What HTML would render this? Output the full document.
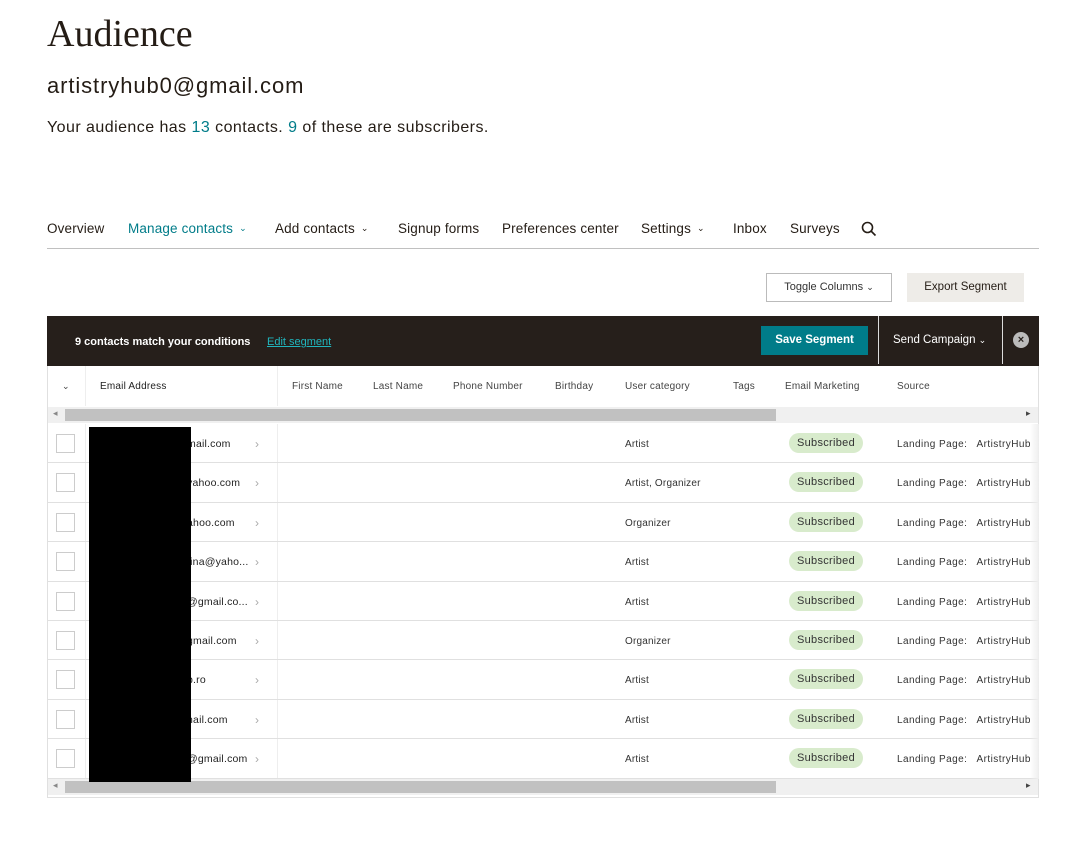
<!DOCTYPE html>
<html><head><style>
*{margin:0;padding:0;box-sizing:border-box}
body{width:1079px;height:858px;background:#fff;font-family:"Liberation Sans",sans-serif;color:#241c15;position:relative;overflow:hidden}
.a{position:absolute;white-space:nowrap}
.nav{font-size:13.5px;top:221px;letter-spacing:.15px}
.ch{font-size:9px;margin-left:6px;vertical-align:2px}
.hd{font-size:10px;color:#444;top:381px;letter-spacing:.2px}
.row{position:absolute;left:47px;width:992px;height:39.4px;border-bottom:1px solid #e0e0e0;font-size:10px;color:#333}
.row .cb{position:absolute;left:9px;top:10px;width:19px;height:19px;border:1px solid #ccc;background:#fff}
.row .vd1{position:absolute;left:38px;top:0;bottom:0;border-left:1px solid #eee}
.row .vd2{position:absolute;left:230px;top:0;bottom:0;border-left:1px solid #eee}
.row .em{position:absolute;left:140px;top:14px;font-size:10.5px;color:#222;letter-spacing:.2px}
.row .ar{position:absolute;left:208px;top:13px;color:#aaa;font-size:12px}
.row .uc{position:absolute;left:578px;top:15px;letter-spacing:.2px}
.row .pill{position:absolute;left:742px;top:9px;width:74px;height:20px;border-radius:10px;background:#d8ebcc;font-size:11px;color:#333;text-align:center;line-height:20px;letter-spacing:.3px}
.row .src{position:absolute;left:850px;top:15px;letter-spacing:.45px}
.sb{position:absolute;left:48px;width:990px;height:16px;background:#f0f0f0}
.sb .th{position:absolute;left:17px;top:2px;width:711px;height:12px;background:#c1c1c1}
</style></head><body>
<div class="a" style="left:47px;top:12px;font-family:'Liberation Serif',serif;font-size:38px">Audience</div>
<div class="a" style="left:47px;top:73px;font-size:22px;letter-spacing:.9px">artistryhub0@gmail.com</div>
<div class="a" style="left:47px;top:119px;font-size:16px;letter-spacing:.45px">Your audience has <span style="color:#007c89">13</span> contacts. <span style="color:#007c89">9</span> of these are subscribers.</div>

<div class="a nav" style="left:47px">Overview</div>
<div class="a nav" style="left:128px;color:#007c89">Manage contacts<span class="ch">⌄</span></div>
<div class="a nav" style="left:275px">Add contacts<span class="ch">⌄</span></div>
<div class="a nav" style="left:398px">Signup forms</div>
<div class="a nav" style="left:502px">Preferences center</div>
<div class="a nav" style="left:641px">Settings<span class="ch">⌄</span></div>
<div class="a nav" style="left:733px">Inbox</div>
<div class="a nav" style="left:790px">Surveys</div>
<svg class="a" style="left:861px;top:221px" width="16" height="16" viewBox="0 0 16 16"><circle cx="6.5" cy="6.5" r="5" fill="none" stroke="#241c15" stroke-width="1.6"/><path d="M10 10l4.5 4.5" stroke="#241c15" stroke-width="1.6"/></svg>
<div class="a" style="left:47px;top:248px;width:992px;border-top:1px solid #c0c0c0"></div>

<div class="a" style="left:766px;top:273px;width:126px;height:29px;border:1px solid #bbb;font-size:11px;text-align:center;line-height:27px;color:#333">Toggle Columns <span style="font-size:9px">⌄</span></div>
<div class="a" style="left:907px;top:273px;width:117px;height:29px;background:#eeece8;font-size:11.5px;text-align:center;line-height:29px">Export Segment</div>

<div class="a" style="left:47px;top:316px;width:992px;height:50px;background:#261f1b"></div>
<div class="a" style="left:75px;top:336px;font-size:11px;font-weight:bold;color:#fff">9 contacts match your conditions</div>
<div class="a" style="left:267px;top:336px;font-size:11px;color:#20b5bd;text-decoration:underline">Edit segment</div>
<div class="a" style="left:761px;top:326px;width:107px;height:29px;background:#007c89;color:#fff;font-size:11.5px;font-weight:bold;text-align:center;line-height:29px">Save Segment</div>
<div class="a" style="left:878px;top:316px;height:48px;border-left:1px solid #ddd"></div>
<div class="a" style="left:893px;top:334px;font-size:11.5px;color:#fff">Send Campaign <span style="font-size:9px">⌄</span></div>
<div class="a" style="left:1002px;top:316px;height:48px;border-left:1px solid #ddd"></div>
<div class="a" style="left:1013px;top:332px;width:16px;height:16px;border-radius:50%;background:#bbb;color:#261f1b;font-size:11px;text-align:center;line-height:16px;font-weight:bold">×</div>

<div class="a" style="left:47px;top:366px;width:992px;height:432px;border:1px solid #e0e0e0;border-top:none"></div>
<div class="a" style="left:85px;top:366px;height:40px;border-left:1px solid #eee"></div>
<div class="a" style="left:277px;top:366px;height:40px;border-left:1px solid #eee"></div>
<div class="a hd" style="left:62px;font-size:9px">⌄</div>
<div class="a hd" style="left:100px;color:#222">Email Address</div>
<div class="a hd" style="left:292px">First Name</div>
<div class="a hd" style="left:373px">Last Name</div>
<div class="a hd" style="left:453px">Phone Number</div>
<div class="a hd" style="left:555px">Birthday</div>
<div class="a hd" style="left:625px">User category</div>
<div class="a hd" style="left:733px">Tags</div>
<div class="a hd" style="left:785px">Email Marketing</div>
<div class="a hd" style="left:897px">Source</div>
<div class="sb" style="top:407px"><div class="th"></div><span class="a" style="left:5px;top:1px;font-size:9px;color:#888">◂</span><span class="a" style="left:978px;top:1px;font-size:9px;color:#444">▸</span></div>

<div class="row" style="top:424px"><div class="cb"></div><div class="vd1"></div><div class="vd2"></div><div class="em">mail.com</div><div class="ar">›</div><div class="uc">Artist</div><div class="pill">Subscribed</div><div class="src">Landing Page:&nbsp;&nbsp; ArtistryHub</div></div>
<div class="row" style="top:463.4px"><div class="cb"></div><div class="vd1"></div><div class="vd2"></div><div class="em">yahoo.com</div><div class="ar">›</div><div class="uc">Artist, Organizer</div><div class="pill">Subscribed</div><div class="src">Landing Page:&nbsp;&nbsp; ArtistryHub</div></div>
<div class="row" style="top:502.8px"><div class="cb"></div><div class="vd1"></div><div class="vd2"></div><div class="em">ahoo.com</div><div class="ar">›</div><div class="uc">Organizer</div><div class="pill">Subscribed</div><div class="src">Landing Page:&nbsp;&nbsp; ArtistryHub</div></div>
<div class="row" style="top:542.2px"><div class="cb"></div><div class="vd1"></div><div class="vd2"></div><div class="em">tina@yaho...</div><div class="ar">›</div><div class="uc">Artist</div><div class="pill">Subscribed</div><div class="src">Landing Page:&nbsp;&nbsp; ArtistryHub</div></div>
<div class="row" style="top:581.6px"><div class="cb"></div><div class="vd1"></div><div class="vd2"></div><div class="em">@gmail.co...</div><div class="ar">›</div><div class="uc">Artist</div><div class="pill">Subscribed</div><div class="src">Landing Page:&nbsp;&nbsp; ArtistryHub</div></div>
<div class="row" style="top:621px"><div class="cb"></div><div class="vd1"></div><div class="vd2"></div><div class="em">gmail.com</div><div class="ar">›</div><div class="uc">Organizer</div><div class="pill">Subscribed</div><div class="src">Landing Page:&nbsp;&nbsp; ArtistryHub</div></div>
<div class="row" style="top:660.4px"><div class="cb"></div><div class="vd1"></div><div class="vd2"></div><div class="em">b.ro</div><div class="ar">›</div><div class="uc">Artist</div><div class="pill">Subscribed</div><div class="src">Landing Page:&nbsp;&nbsp; ArtistryHub</div></div>
<div class="row" style="top:699.8px"><div class="cb"></div><div class="vd1"></div><div class="vd2"></div><div class="em">nail.com</div><div class="ar">›</div><div class="uc">Artist</div><div class="pill">Subscribed</div><div class="src">Landing Page:&nbsp;&nbsp; ArtistryHub</div></div>
<div class="row" style="top:739.2px"><div class="cb"></div><div class="vd1"></div><div class="vd2"></div><div class="em">@gmail.com</div><div class="ar">›</div><div class="uc">Artist</div><div class="pill">Subscribed</div><div class="src">Landing Page:&nbsp;&nbsp; ArtistryHub</div></div>
<div class="sb" style="top:779px"><div class="th"></div><span class="a" style="left:5px;top:1px;font-size:9px;color:#888">◂</span><span class="a" style="left:978px;top:1px;font-size:9px;color:#444">▸</span></div>

<div class="a" style="left:1030px;top:424px;width:9px;height:355px;background:linear-gradient(90deg,rgba(255,255,255,0),#eee)"></div>
<div class="a" style="left:89px;top:427px;width:102px;height:355px;background:#000"></div>
</body></html>
